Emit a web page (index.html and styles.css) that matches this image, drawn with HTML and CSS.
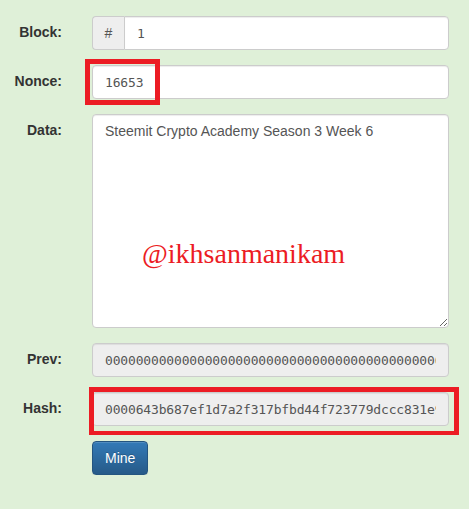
FILE: index.html
```html
<!DOCTYPE html>
<html lang="en">
<head>
    <meta charset="UTF-8">
    <meta name="viewport" content="width=device-width, initial-scale=1.0">
    <title>Block</title>
    <link rel="stylesheet" href="styles.css">
</head>
<body>

<form class="block-form">
    <label class="control-label" for="block">Block:</label>
    <div class="input-group">
        <span class="addon">#</span>
        <input type="text" id="block" class="form-control mono" value="1">
    </div>

    <label class="control-label" for="nonce">Nonce:</label>
    <div class="field">
        <input type="text" id="nonce" class="form-control mono" value="16653">
        <span class="mark mark-nonce"></span>
    </div>

    <label class="control-label" for="data">Data:</label>
    <div class="field">
        <textarea id="data" class="form-control data-area" rows="10">Steemit Crypto Academy Season 3 Week 6</textarea>
        <span class="watermark">@ikhsanmanikam</span>
    </div>

    <label class="control-label" for="prev">Prev:</label>
    <div class="field">
        <input type="text" id="prev" class="form-control mono" readonly value="0000000000000000000000000000000000000000000000000000000000000000">
    </div>

    <label class="control-label" for="hash">Hash:</label>
    <div class="field">
        <input type="text" id="hash" class="form-control mono" readonly value="0000643b687ef1d7a2f317bfbd44f723779dccc831e9a4b0c2d7e51f8a36b902">
        <span class="mark mark-hash"></span>
    </div>

    <span></span>
    <div class="field">
        <button type="button" class="btn-primary">Mine</button>
    </div>
</form>

</body>
</html>
```

FILE: styles.css
```css
body {
    margin: 0;
    background: #dff0d8;
    font-family: "Liberation Sans", Arial, sans-serif;
    font-size: 14px;
    line-height: 20px;
    color: #333;
}
.block-form {
    display: grid;
    grid-template-columns: 62px 357px;
    column-gap: 30px;
    row-gap: 15px;
    padding-top: 16px;
}
.control-label {
    font-weight: bold;
    text-align: right;
    padding-top: 6px;
}
.field { position: relative; }
.input-group { display: flex; }
.form-control {
    display: block;
    width: 100%;
    height: 34px;
    box-sizing: border-box;
    padding: 6px 12px;
    border: 1px solid #ccc;
    border-radius: 4px;
    background: #fff;
    color: #555;
    font-family: "Liberation Sans", Arial, sans-serif;
    font-size: 14px;
    line-height: 20px;
    box-shadow: inset 0 1px 1px rgba(0, 0, 0, .075);
    outline: none;
    margin: 0;
}
.form-control[readonly] { background: #eee; }
.mono {
    font-family: "DejaVu Sans Mono", monospace;
    font-size: 13px;
    letter-spacing: -0.16px;
}
.addon {
    width: 32px;
    box-sizing: border-box;
    flex: none;
    text-align: center;
    padding: 6px 0;
    border: 1px solid #ccc;
    border-right: 0;
    border-radius: 4px 0 0 4px;
    background: #eee;
    color: #555;
}
.input-group .form-control { border-radius: 0 4px 4px 0; }
.data-area {
    height: 214px;
    resize: vertical;
}
.watermark {
    position: absolute;
    left: 50px;
    top: 126px;
    font-family: "Liberation Serif", "Times New Roman", serif;
    font-size: 28px;
    line-height: 28px;
    color: #ec1c24;
    pointer-events: none;
}
.mark {
    position: absolute;
    border: 5px solid #ec1c24;
    box-sizing: border-box;
    pointer-events: none;
}
.mark-nonce { left: -7px; top: -6px; width: 75px; height: 46px; }
.mark-hash { left: -3px; top: -5px; width: 370px; height: 48px; border-width: 5px 5px 4px 5px; }
.btn-primary {
    height: 34px;
    padding: 6px 12px;
    font-family: "Liberation Sans", Arial, sans-serif;
    font-size: 14px;
    line-height: 20px;
    color: #fff;
    border: 1px solid #245580;
    border-radius: 4px;
    background-image: linear-gradient(to bottom, #337ab7 0, #265a88 100%);
    text-shadow: 0 -1px 0 rgba(0, 0, 0, .2);
    box-shadow: inset 0 1px 0 rgba(255, 255, 255, .15), 0 1px 1px rgba(0, 0, 0, .075);
    cursor: pointer;
}
```
